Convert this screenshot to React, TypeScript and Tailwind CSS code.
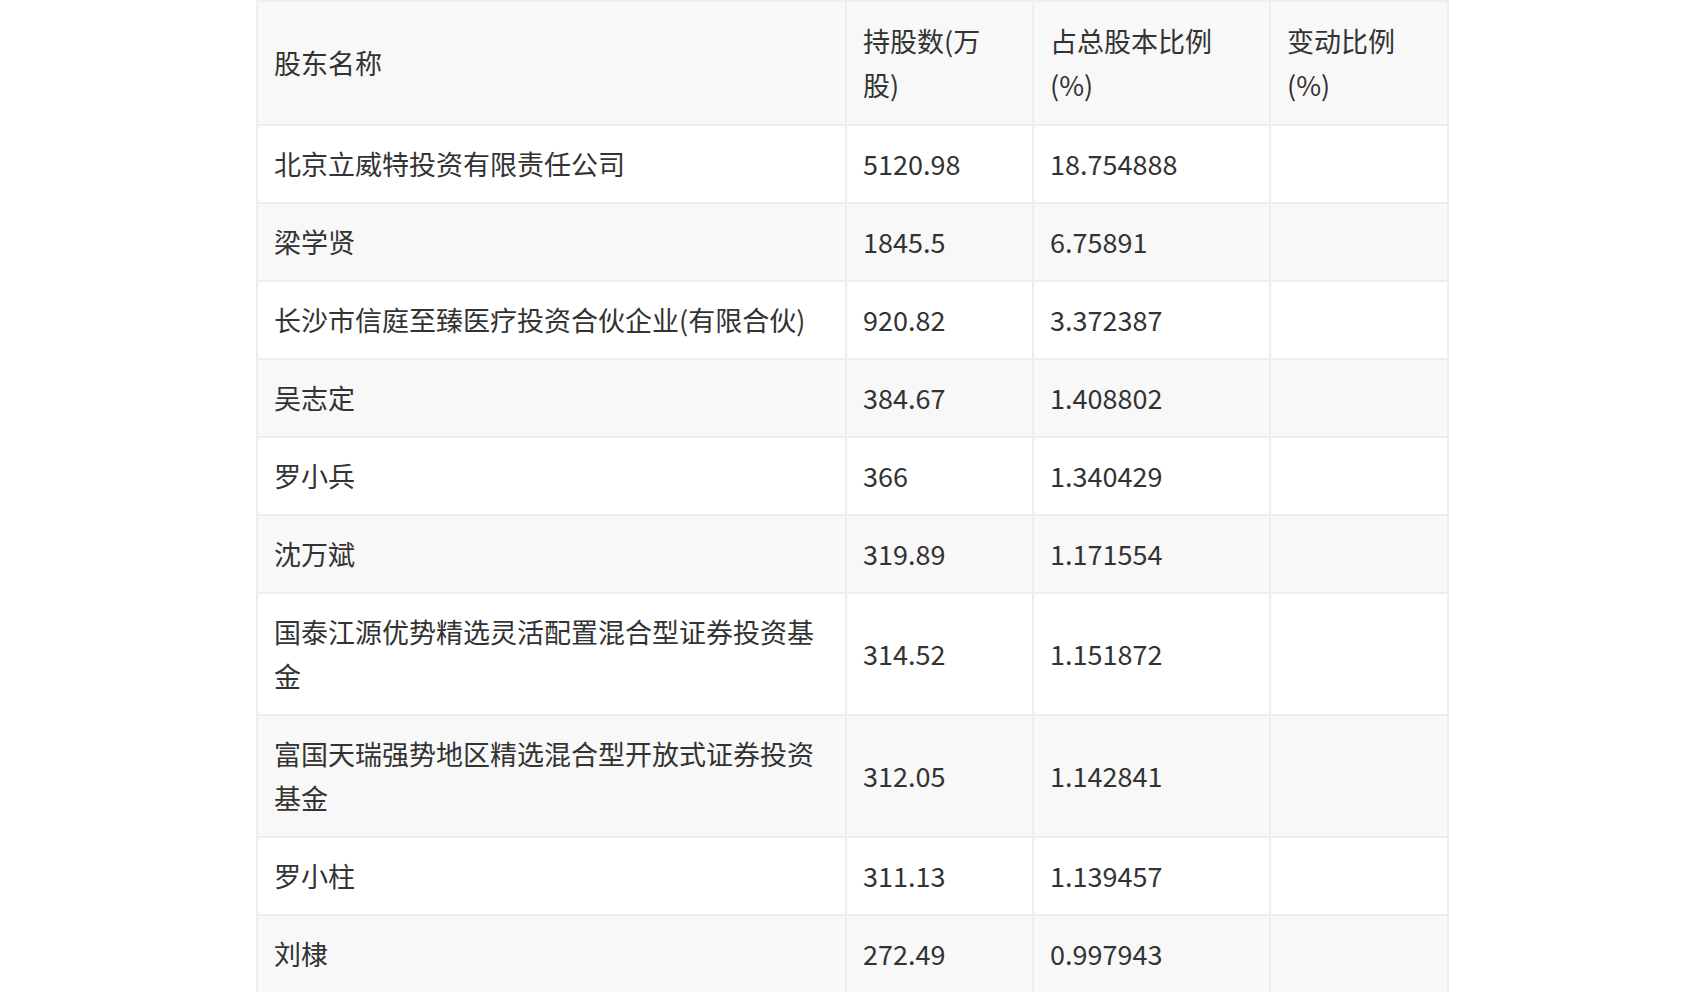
export default function App() {
  const rows: [string, string, string, number][] = [
    ["北京立威特投资有限责任公司", "5120.98", "18.754888", 78],
    ["梁学贤", "1845.5", "6.75891", 78],
    ["长沙市信庭至臻医疗投资合伙企业(有限合伙)", "920.82", "3.372387", 78],
    ["吴志定", "384.67", "1.408802", 78],
    ["罗小兵", "366", "1.340429", 78],
    ["沈万斌", "319.89", "1.171554", 78],
    ["国泰江源优势精选灵活配置混合型证券投资基金", "314.52", "1.151872", 122],
    ["富国天瑞强势地区精选混合型开放式证券投资基金", "312.05", "1.142841", 122],
    ["罗小柱", "311.13", "1.139457", 78],
    ["刘棣", "272.49", "0.997943", 78],
  ];
  const cell = "border-2 border-[#eeeeee] px-[16px] align-middle";
  return (
    <div className="w-[1700px] h-[992px] bg-white overflow-hidden text-[#333333] text-[27px] leading-[44px]" style={{ fontFamily: '"Noto Sans CJK SC", "Noto Sans", sans-serif' }}>
      <table className="ml-[256px] w-[1191px] border-collapse table-fixed">
        <colgroup>
          <col className="w-[589px]" />
          <col className="w-[187px]" />
          <col className="w-[237px]" />
          <col className="w-[178px]" />
        </colgroup>
        <thead>
          <tr className="h-[124px] bg-[#f8f8f8]">
            <th className={cell + " font-normal text-left"}>股东名称</th>
            <th className={cell + " font-normal text-left"}>持股数(万股)</th>
            <th className={cell + " font-normal text-left"}>占总股本比例(%)</th>
            <th className={cell + " font-normal text-left"}>变动比例(%)</th>
          </tr>
        </thead>
        <tbody>
          {rows.map((r, i) => (
            <tr key={i} className={i % 2 === 1 ? "bg-[#f8f8f8]" : "bg-white"} style={{ height: r[3] }}>
              <td className={cell}>{r[0]}</td>
              <td className={cell}>{r[1]}</td>
              <td className={cell}>{r[2]}</td>
              <td className={cell}></td>
            </tr>
          ))}
        </tbody>
      </table>
    </div>
  );
}
